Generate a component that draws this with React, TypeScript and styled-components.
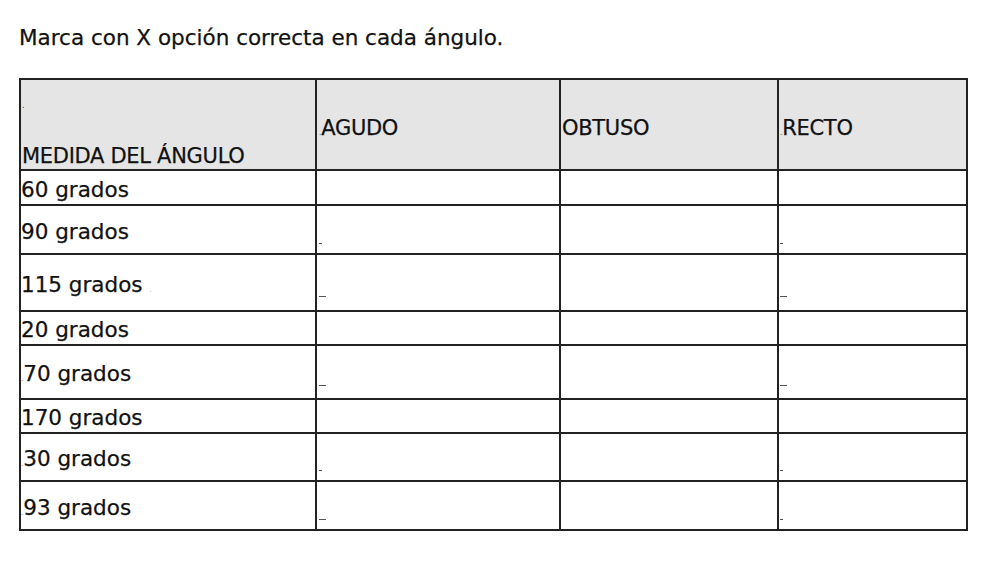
import React from "react";
import styled, { createGlobalStyle } from "styled-components";

const GlobalStyle = createGlobalStyle`
  html, body {
    margin: 0;
    padding: 0;
    background: #ffffff;
  }
  body {
    font-family: "DejaVu Sans", Verdana, sans-serif;
    color: #111111;
  }
`;

const Page = styled.main`
  padding: 26px 0 0 19px;
`;

const Title = styled.h1`
  margin: 0 0 28px 0;
  font-size: 21.5px;
  line-height: 24px;
  font-weight: normal;
  color: #111111;
  -webkit-text-stroke: 0.25px #111111;
`;

const Grid = styled.div`
  display: grid;
  width: 949px;
  box-sizing: border-box;
  grid-template-columns: 296px 244px 218px 189px;
  grid-template-rows: 91px 35px 49px 57px 34px 54px 34px 48px 49px;
  border-top: 2px solid #222;
  border-left: 2px solid #222;
`;

const Cell = styled.div`
  box-sizing: border-box;
  border-right: 2px solid #222;
  border-bottom: 2px solid #222;
  font-size: 21.5px;
  line-height: 24px;
  white-space: nowrap;
  overflow: hidden;
  -webkit-text-stroke: 0.25px #111111;
`;

const HeadCell = styled(Cell)<{ $pad?: number }>`
  background: #e5e5e5;
  display: flex;
  align-items: center;
  padding: 6px 0 0 ${(p) => p.$pad ?? 1}px;
  font-size: 21px;
  letter-spacing: -0.3px;
`;

const FirstHeadCell = styled(Cell)`
  background: #e5e5e5;
  display: flex;
  flex-direction: column;
  justify-content: space-between;
  padding: 9px 0 1px 1px;
  font-size: 21px;
  letter-spacing: -0.3px;
`;

const Line = styled.div`
  height: 24px;
  line-height: 24px;
`;

const BodyCell = styled(Cell)<{ $pad?: number }>`
  display: flex;
  align-items: center;
  padding: 4px 0 0 ${(p) => p.$pad ?? 0}px;
`;

const Tiny = styled.span<{ $size: number; $tone?: string }>`
  font-size: ${(p) => p.$size}px;
  color: ${(p) => p.$tone ?? "#333"};
  -webkit-text-stroke: 0;
  letter-spacing: 0;
`;

const Dash = styled.span<{ $w: number }>`
  display: inline-block;
  width: ${(p) => p.$w}px;
  height: 1px;
  background: #555;
  vertical-align: -5px;
`;

type Mark = "none" | "small" | "dash";

interface Row {
  label: string;
  lead?: boolean;
  trail?: boolean;
  agudo: Mark;
  recto: Mark;
}

const rows: Row[] = [
  { label: "60 grados", agudo: "none", recto: "none" },
  { label: "90 grados", agudo: "small", recto: "small" },
  { label: "115 grados", trail: true, agudo: "dash", recto: "dash" },
  { label: "20 grados", agudo: "none", recto: "none" },
  { label: "70 grados", lead: true, agudo: "dash", recto: "dash" },
  { label: "170 grados", agudo: "none", recto: "none" },
  { label: "30 grados", lead: true, agudo: "small", recto: "small" },
  { label: "93 grados", lead: true, agudo: "dash", recto: "small" },
];

const Stray: React.FC<{ kind: Mark }> = ({ kind }) => {
  if (kind === "none") return null;
  return (
    <Line>
      <Dash $w={kind === "dash" ? 7 : 3} />
    </Line>
  );
};

export default function App() {
  return (
    <>
      <GlobalStyle />
      <Page>
        <Title>Marca con X opción correcta en cada ángulo.</Title>
        <Grid>
          <FirstHeadCell>
            <Line>
              <Tiny $size={8}>.</Tiny>
            </Line>
            <Line>MEDIDA DEL ÁNGULO</Line>
          </FirstHeadCell>
          <HeadCell $pad={2}>
            <Line>
              <Tiny $size={7}>.</Tiny>AGUDO
            </Line>
          </HeadCell>
          <HeadCell $pad={1}>
            <Line>OBTUSO</Line>
          </HeadCell>
          <HeadCell $pad={1}>
            <Line>
              <Tiny $size={7}>.</Tiny>RECTO
            </Line>
          </HeadCell>
          {rows.map((r) => (
            <React.Fragment key={r.label}>
              <BodyCell>
                <Line>
                  {r.lead && (
                    <Tiny $size={7} $tone="#666">
                      .
                    </Tiny>
                  )}
                  {r.label}
                  {r.trail && (
                    <>
                      {" "}
                      <Tiny $size={7} $tone="#999">
                        .
                      </Tiny>
                    </>
                  )}
                </Line>
              </BodyCell>
              <BodyCell $pad={2}>
                <Stray kind={r.agudo} />
              </BodyCell>
              <BodyCell />
              <BodyCell $pad={1}>
                <Stray kind={r.recto} />
              </BodyCell>
            </React.Fragment>
          ))}
        </Grid>
      </Page>
    </>
  );
}
